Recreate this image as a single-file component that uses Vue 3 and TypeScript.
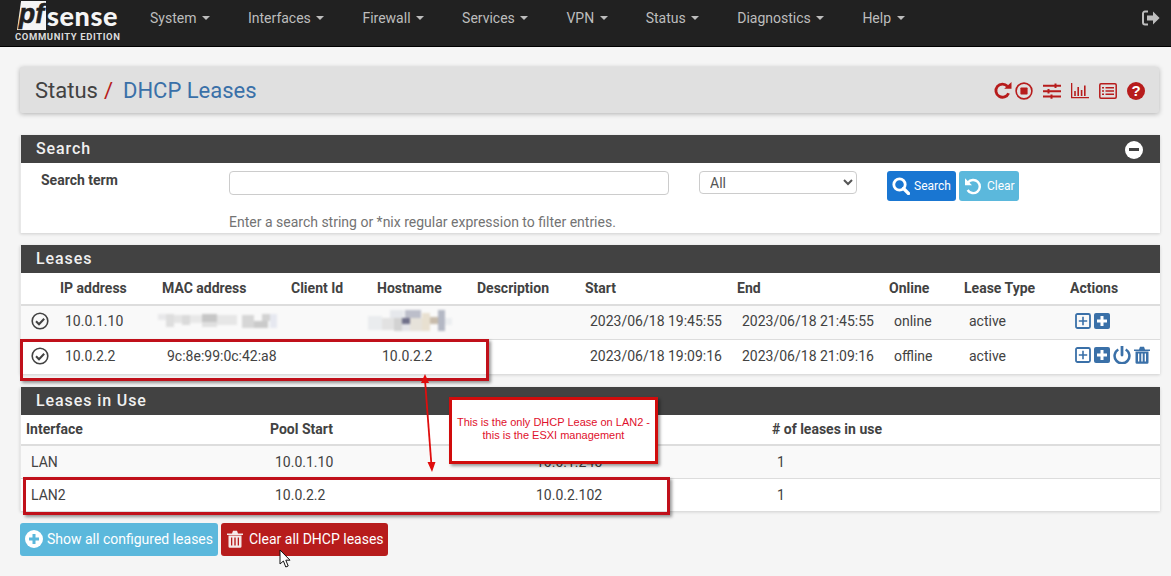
<script setup lang="ts">
type Block = [number, number, number, number, string]
const nav: string[] = ['System', 'Interfaces', 'Firewall', 'Services', 'VPN', 'Status', 'Diagnostics', 'Help']
const leaseHead: string[] = ['', 'IP address', 'MAC address', 'Client Id', 'Hostname', 'Description', 'Start', 'End', 'Online', 'Lease Type', 'Actions']
const leaseCols: number[] = [34, 102, 129, 86, 100, 108, 152, 152, 75, 106, 95]
const useCols: number[] = [244, 261, 241, 393]
const useHead: string[] = ['Interface', 'Pool Start', 'Pool End', '# of leases in use']
const useRows: string[][] = [
  ['LAN', '10.0.1.10', '10.0.1.245', '1'],
  ['LAN2', '10.0.2.2', '10.0.2.102', '1'],
]
const macBlur: Block[] = [
  [0, 5, 16, 6, '#e8e8ea'], [8, 5, 8, 13, '#dedede'], [16, 6, 8, 8, '#e4e4e4'], [24, 6, 8, 10, '#dadada'], [32, 6, 12, 8, '#e8e8e8'],
  [44, 5, 15, 8, '#c6c6c6'], [44, 13, 15, 5, '#e0e0e0'], [59, 6, 20, 10, '#e6e6e6'], [84, 6, 12, 13, '#d6d6d6'],
  [96, 12, 14, 7, '#cacaca'], [104, 5, 8, 7, '#d2d2d2'], [112, 5, 7, 14, '#e6e8f0'],
]
const hostBlur: Block[] = [
  [0, 7, 14, 14, '#eaecee'], [14, 9, 12, 12, '#e2e2e2'], [22, 1, 14, 8, '#e6e8ec'], [26, 9, 11, 13, '#d2d2d2'], [37, 1, 16, 8, '#bcbeca'],
  [34, 9, 8, 13, '#e4e4e8'], [34, 9, 8, 6, '#70708a'], [42, 9, 12, 13, '#e6e2da'], [54, 4, 8, 18, '#e8e0d0'],
  [62, 8, 8, 7, '#c8bcac'], [70, 1, 7, 21, '#b4b8c4'], [77, 9, 7, 7, '#eceef0'],
]
</script>

<template>
  <div class="page">
    <svg class="defs" aria-hidden="true">
      <symbol id="i-check" viewBox="0 0 18 18">
        <circle cx="9" cy="9" r="7.8" fill="none" stroke="currentColor" stroke-width="1.6" />
        <path d="M5 9.3l3 3 5.2-5.6" fill="none" stroke="currentColor" stroke-width="2" />
      </symbol>
      <symbol id="i-plus-o" viewBox="0 0 16 16">
        <rect x="1" y="1" width="14" height="14" rx="1.5" fill="none" stroke="currentColor" stroke-width="1.8" />
        <path d="M8 3.8v8.4M3.8 8h8.4" stroke="currentColor" stroke-width="1.6" />
      </symbol>
      <symbol id="i-plus" viewBox="0 0 16 16">
        <rect x="0" y="0" width="16" height="16" rx="2" fill="currentColor" />
        <path d="M8 3v10M3 8h10" stroke="#fff" stroke-width="3" />
      </symbol>
      <symbol id="i-trash" viewBox="0 0 16 18">
        <path d="M0 3.4h16v1.6H0zM5 3.4L6 .8h4l1 2.6z" fill="currentColor" />
        <path fill-rule="evenodd" d="M1.5 5.5h13V16.4a1.4 1.4 0 0 1-1.4 1.4H2.9a1.4 1.4 0 0 1-1.4-1.4zM4 7.5v8h1.3v-8zM7.3 7.5v8h1.4v-8zM10.7 7.5v8H12v-8z" fill="currentColor" />
      </symbol>
    </svg>

    <header class="navbar">
      <div class="brand">
        <div class="logo">
          <span class="pf">pf</span><span class="sense">sense</span>
        </div>
        <div class="edition">COMMUNITY EDITION</div>
      </div>
      <nav class="menu">
        <span v-for="n in nav" :key="n" class="item">{{ n }}<i class="caret"></i></span>
      </nav>
      <svg class="signout" viewBox="0 0 18 16" width="18" height="16">
        <path d="M6 1.5H3A2 2 0 0 0 1 3.5v9a2 2 0 0 0 2 2h3" fill="none" stroke="#bdbdbd" stroke-width="2" />
        <path d="M5 5.5h6V1.5L17.6 8 11 14.5v-4H5z" fill="#bdbdbd" />
      </svg>
    </header>

    <main class="content">
      <section class="crumb">
        <h1><span class="c1">Status</span><span class="sl">/</span><span class="c2">DHCP Leases</span></h1>
        <div class="tools">
          <svg viewBox="0 0 18 18" width="18" height="18" class="t-repeat"><path d="M14.6 11.2A6.6 6.6 0 1 1 13.4 4.2" fill="none" stroke="currentColor" stroke-width="2.8" /><path d="M10.2 6.8h7.3V0z" fill="currentColor" /></svg>
          <svg viewBox="0 0 18 18" width="18" height="18" class="t-stop"><circle cx="9" cy="9" r="7.9" fill="none" stroke="currentColor" stroke-width="1.6" /><rect x="5.4" y="5.4" width="7.2" height="7.2" rx=".8" fill="currentColor" /></svg>
          <svg viewBox="0 0 18 16" width="18" height="16" class="t-sliders"><path d="M0 1.800h18v2H0zM0 7.200h18v2H0zM0 12.600h18v2H0z" fill="currentColor" /><path d="M11.500 .6h2v4.400h-2zM4.500 6h2v4.400h-2zM7.500 11.400h2v4.400h-2z" fill="currentColor" /></svg>
          <svg viewBox="0 0 18 16" width="18" height="16" class="t-chart"><path d="M0 0h1.300v14H18v1.300H0z" fill="currentColor" /><path d="M3.200 8h1.600v5H3.200zM6.400 4h1.600v9H6.400zM9.800 7h1.600v6H9.800zM13 2.500h1.600V13H13z" fill="currentColor" /></svg>
          <svg viewBox="0 0 18 16" width="18" height="16" class="t-list"><rect x=".8" y=".8" width="16.400" height="14.400" rx="1.200" fill="none" stroke="currentColor" stroke-width="1.500" /><path d="M3 4h2v1.600H3zM6.500 4H15v1.600H6.500zM3 7.200h2v1.600H3zM6.500 7.200H15v1.600H6.500zM3 10.400h2V12H3zM6.500 10.400H15V12H6.500z" fill="currentColor" /></svg>
          <span class="t-help">?</span>
        </div>
      </section>

      <section class="panel first">
        <div class="heading"><h2>Search</h2><span class="minus"></span></div>
        <div class="search-body">
          <label class="s-label">Search term</label>
          <div class="s-main">
            <div class="s-row">
              <input class="s-input" type="text" />
              <select class="s-select"><option>All</option></select>
              <div class="s-btns">
                <button class="btn btn-blue small search">
                  <svg viewBox="0 0 18 18" width="18" height="18"><circle cx="7.500" cy="7.500" r="5.700" fill="none" stroke="#fff" stroke-width="2.800" /><path d="M11.500 11.500l5 5" stroke="#fff" stroke-width="3.200" stroke-linecap="round" /></svg>
                  Search
                </button>
                <button class="btn btn-info small clear">
                  <svg viewBox="0 0 18 18" width="18" height="18"><path d="M4 5.500A6.600 6.600 0 1 1 3.600 13" fill="none" stroke="#fff" stroke-width="2.400" /><path d="M1 1.200v7h7z" fill="#fff" /></svg>
                  Clear
                </button>
              </div>
            </div>
            <p class="s-help">Enter a search string or *nix regular expression to filter entries.</p>
          </div>
        </div>
      </section>

      <section class="panel leases">
        <div class="heading"><h2>Leases</h2></div>
        <table class="grid">
          <colgroup><col v-for="(w, i) in leaseCols" :key="i" :style="{ width: w + 'px' }" /></colgroup>
          <thead><tr class="head-row l"><th v-for="h in leaseHead" :key="h">{{ h }}</th></tr></thead>
          <tbody>
            <tr class="r1 striped">
              <td class="chk"><svg width="18" height="18"><use href="#i-check" /></svg></td>
              <td>10.0.1.10</td>
              <td class="blur-cell"><div class="mosaic mac"><i v-for="(b, i) in macBlur" :key="i" :style="{ left: b[0] + 'px', top: b[1] + 'px', width: b[2] + 'px', height: b[3] + 'px', background: b[4] }"></i></div></td>
              <td></td>
              <td class="blur-cell"><div class="mosaic host"><i v-for="(b, i) in hostBlur" :key="i" :style="{ left: b[0] + 'px', top: b[1] + 'px', width: b[2] + 'px', height: b[3] + 'px', background: b[4] }"></i></div></td>
              <td></td>
              <td>2023/06/18 19:45:55</td>
              <td>2023/06/18 21:45:55</td>
              <td>online</td>
              <td>active</td>
              <td class="acts">
                <svg width="16" height="16"><use href="#i-plus-o" /></svg>
                <svg width="16" height="16"><use href="#i-plus" /></svg>
              </td>
            </tr>
            <tr class="r2">
              <td class="chk"><svg width="18" height="18"><use href="#i-check" /></svg></td>
              <td>10.0.2.2</td>
              <td>9c:8e:99:0c:42:a8</td>
              <td></td>
              <td>10.0.2.2</td>
              <td></td>
              <td>2023/06/18 19:09:16</td>
              <td>2023/06/18 21:09:16</td>
              <td>offline</td>
              <td>active</td>
              <td class="acts">
                <svg width="16" height="16"><use href="#i-plus-o" /></svg>
                <svg width="16" height="16"><use href="#i-plus" /></svg>
                <svg width="18" height="18" viewBox="0 0 17 17"><path d="M5 3.300A7 7 0 1 0 12 3.300" fill="none" stroke="currentColor" stroke-width="2.400" /><path d="M8.500 .5v8" stroke="currentColor" stroke-width="2.600" stroke-linecap="round" /></svg>
                <svg width="16" height="18"><use href="#i-trash" /></svg>
              </td>
            </tr>
          </tbody>
        </table>
      </section>

      <section class="panel inuse">
        <div class="heading"><h2>Leases in Use</h2></div>
        <table class="grid">
          <colgroup><col v-for="(w, i) in useCols" :key="i" :style="{ width: w + 'px' }" /></colgroup>
          <thead><tr class="head-row u"><th v-for="h in useHead" :key="h">{{ h }}</th></tr></thead>
          <tbody>
            <tr v-for="(r, ri) in useRows" :key="ri" class="u-row" :class="{ striped: ri === 0 }">
              <td v-for="(c, ci) in r" :key="ci">{{ c }}</td>
            </tr>
          </tbody>
        </table>
      </section>

      <div class="actions">
        <button class="btn btn-info big">
          <svg viewBox="0 0 18 18" width="18" height="18"><circle cx="9" cy="9" r="9" fill="#fff" /><path d="M9 4v10M4 9h10" stroke="#5bb8dc" stroke-width="3" /></svg>
          Show all configured leases
        </button>
        <button class="btn btn-red big">
          <svg width="16" height="18" class="w"><use href="#i-trash" /></svg>
          Clear all DHCP leases
        </button>
      </div>
    </main>

    <div class="mark mark-a"></div>
    <div class="mark mark-b"></div>
    <svg class="arrow" width="40" height="100" viewBox="0 0 40 100">
      <path d="M10 6L16.500 92" stroke="#e00d0d" stroke-width="1.800" />
      <path d="M10 0l-4 9h8zM17 98l-4.500-10h8z" fill="#e00d0d" />
    </svg>
    <div class="note">This is the only DHCP Lease on LAN2 -<br />this is the ESXI management</div>
    <svg class="cursor" width="14" height="20" viewBox="0 0 14 20">
      <path d="M1 1v14l3.400-3 2.400 6 2.400-1-2.400-5.800H11z" fill="#fff" stroke="#111" stroke-width="1" />
    </svg>
  </div>
</template>

<style>
html, body { margin: 0; background: #f5f5f5; }
</style>

<style scoped>
.page {
  position: relative;
  width: 1171px;
  height: 576px;
  overflow: hidden;
  background: #f5f5f5;
  color: #424242;
  font: 14px/20px Roboto, "Liberation Sans", sans-serif;
}
.defs { position: absolute; width: 0; height: 0; }

.navbar {
  display: flex;
  align-items: flex-start;
  height: 46px;
  background: #212121;
  border-bottom: 1px solid #000;
}
.brand { width: 150px; flex: none; padding-left: 15px; box-sizing: border-box; }
.logo { display: flex; align-items: flex-start; height: 30px; margin-left: 2px; margin-top: 1px; }
.pf {
  position: relative;
  z-index: 0;
  flex: none;
  width: 29px;
  height: 29px;
  color: #212121;
  font: italic 700 27px/26px "Liberation Sans", sans-serif;
  -webkit-text-stroke: .5px #212121;
  text-align: center;
}
.pf::before {
  content: "";
  position: absolute;
  inset: 0;
  z-index: -1;
  background: #f5f5f5;
  clip-path: polygon(14% 0, 100% 0, 100% 100%, 0 100%);
}
.sense { color: #f5f5f5; font: 900 27px/30px Lato, "Liberation Sans", sans-serif; margin-left: 1px; letter-spacing: .6px; }
.edition { color: #dcdcdc; font: 700 9.500px/11px Roboto, sans-serif; letter-spacing: .6px; margin-top: 0; white-space: nowrap; }
.menu { display: flex; gap: 38px; color: #bdbdbd; margin-top: 8px; }
.item { display: inline-flex; align-items: center; white-space: nowrap; }
.caret { width: 0; height: 0; margin-left: 5.550px; border: 4px solid transparent; border-top-color: #bdbdbd; border-bottom: 0; }
.signout { margin-left: auto; margin-right: 11px; margin-top: 10px; }

.content { padding: 20px 11px 0 20px; }
.crumb {
  display: flex;
  align-items: center;
  justify-content: space-between;
  height: 46px;
  padding: 0 15px;
  background: #e0e0e0;
  border-radius: 2px;
  box-shadow: 0 1px 5px rgba(0, 0, 0, .28);
  margin-right: 1px;
}
h1 { margin: 1px 0 0; font-size: 22px; font-weight: 400; line-height: 45px; }
.c1 { color: #424242; }
.sl { color: #b71c1c; margin: 0 10px 0 6px; }
.c2 { color: #3a70a8; }
.tools { display: flex; align-items: center; color: #b71c1c; margin: 1px -1px 0 0; }
.t-repeat { margin-right: 3px; }
.t-stop { margin-right: 10px; }
.t-sliders { margin-right: 10px; }
.t-chart { margin-right: 10px; }
.t-list { margin-right: 10px; }
.t-help {
  width: 18px;
  height: 18px;
  border-radius: 50%;
  background: #b71c1c;
  color: #fff;
  font: 700 15px/18px "Liberation Sans", sans-serif;
  text-align: center;
}

.panel {
  background: #fff;
  border-left: 1px solid #e8e8e8;
  box-shadow: 0 1px 3px rgba(0, 0, 0, .16);
  margin-top: 12px;
}
.panel.first { margin-top: 22px; }
.panel.inuse { margin-top: 13px; }
.heading {
  display: flex;
  align-items: center;
  justify-content: space-between;
  height: 28px;
  padding: 0 15px;
  background: #424242;
  color: #fff;
}
h2 { margin: 0; font-size: 16px; font-weight: 500; letter-spacing: .9px; color: #f0f0f0; }
.minus { position: relative; width: 18px; height: 18px; border-radius: 50%; background: #fff; margin: 1px 2px 0 0; }
.minus::after { content: ""; position: absolute; left: 4px; top: 7.500px; width: 10px; height: 3px; background: #424242; }

.search-body { display: flex; height: 70px; }
.s-label { width: 208px; flex: none; padding-left: 20px; padding-top: 7px; box-sizing: border-box; font-weight: 700; color: #424242; line-height: 20px; }
.s-main { flex: 1; }
.s-row { display: flex; align-items: flex-start; margin-top: 8px; }
.s-input { width: 440px; height: 24px; box-sizing: border-box; border: 1px solid #ccc; border-radius: 4px; background: #fff; margin: 0; padding: 0 6px; }
.s-select { width: 158px; height: 23px; margin: 0 0 0 30px; box-sizing: border-box; border: 1px solid #ccc; border-radius: 4px; background: #fff; color: #555; font: 14px Roboto, sans-serif; padding-left: 6px; }
.s-btns { display: flex; gap: 3px; margin-left: 30px; }
.btn {
  display: inline-flex;
  align-items: center;
  border: 0;
  border-radius: 3px;
  color: #fff;
  font-family: Roboto, sans-serif;
  padding: 0;
  white-space: nowrap;
}
.small { height: 30px; font-size: 12px; }
.small.search { width: 69px; padding-left: 5px; gap: 4px; }
.small.clear { width: 60px; padding-left: 5px; gap: 5px; }
.btn-blue { background: #1976d2; }
.btn-info { background: #5bb8dc; }
.btn-red { background: #b71c1c; }
.s-help { margin: 11px 0 0; color: #737373; line-height: 20px; }

.grid { width: 1139px; table-layout: fixed; border-collapse: collapse; }
th { text-align: left; font-weight: 700; padding: 0 0 0 5px; color: #424242; }
td { padding: 0 0 0 10px; white-space: nowrap; }
.head-row { border-bottom: 2px solid #ddd; }
.head-row.l { height: 32px; }
.head-row.l th { padding-bottom: 2px; }
.head-row.u { height: 30px; }
.head-row.u th { padding-bottom: 2px; }
.r1 { height: 34px; border-bottom: 1px solid #ddd; }
.r2 { height: 35px; }
.r1 td, .r2 td { padding-bottom: 2px; }
.u-row { height: 33px; border-bottom: 1px solid #ddd; }
.u-row:last-child { border-bottom: 0; }
.striped { background: #f9f9f9; }
.chk { padding-left: 10px; color: #424242; }
.chk svg { display: block; }
.acts { color: #3a70a8; padding-left: 10px; }
.acts svg { display: inline-block; vertical-align: middle; margin: 0 3px 2px 0; }
.mosaic { position: relative; height: 24px; filter: blur(.8px); }
.mosaic i { position: absolute; }
.mac { margin-left: -2px; }
.host { margin-left: -7px; }
.blur-cell { padding-left: 3px; overflow: visible; }

.actions { display: flex; gap: 3px; margin-top: 12px; }
.big { height: 33px; font-size: 14px; padding-bottom: 2px; }
.btn-info.big { width: 198px; padding-left: 5px; gap: 4px; }
.btn-red.big { width: 167px; padding-left: 6px; gap: 6px; }
.w { color: #f5e8e8; }

.mark { position: absolute; border: 3px solid #c0101a; box-shadow: 2px 2px 3px rgba(0, 0, 0, .4); box-sizing: border-box; }
.mark-a { left: 20px; top: 339px; width: 469px; height: 42px; }
.mark-b { left: 23px; top: 477px; width: 647px; height: 38px; }
.arrow { position: absolute; left: 415px; top: 374px; }
.note {
  position: absolute;
  left: 449px;
  top: 397px;
  width: 209px;
  height: 67px;
  box-sizing: border-box;
  border: 3px solid #d10c0c;
  background: #fff;
  box-shadow: 2px 2px 3px rgba(0, 0, 0, .4);
  color: #e0102c;
  font: 11px/13px "Liberation Sans", sans-serif;
  text-align: center;
  padding-top: 16px;
}
.cursor { position: absolute; left: 279px; top: 549px; }
</style>
